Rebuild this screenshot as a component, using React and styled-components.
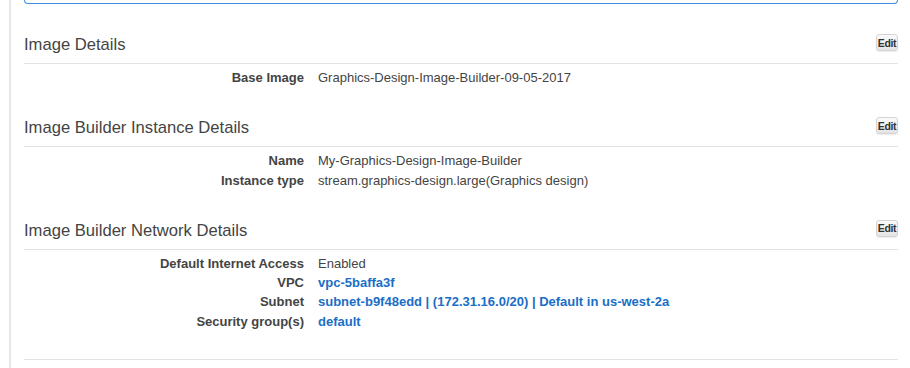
import React from 'react';
import styled, { createGlobalStyle } from 'styled-components';

const GlobalStyle = createGlobalStyle`
  html, body {
    margin: 0;
    padding: 0;
    background: #fff;
  }
  body {
    font-family: "Liberation Sans", Arial, Helvetica, sans-serif;
    color: #444;
  }
`;

const Page = styled.div`
  margin-left: 9px;
  min-height: 368px;
  border-left: 2px solid #e6e6e6;
  padding: 0 12px 0 13px;
`;

const TopBox = styled.div`
  height: 3px;
  border: 1px solid #3f8de0;
  border-top: none;
  border-radius: 0 0 4px 4px;
  margin-bottom: 23px;
`;

const Section = styled.section`
  border-bottom: ${p => (p.$last ? '1px solid #e2e2e2' : 'none')};
`;

const Header = styled.div`
  display: flex;
  justify-content: space-between;
  align-items: center;
  height: 36px;
  border-bottom: 1px solid #e2e2e2;
`;

const Title = styled.h2`
  margin: 0;
  font-size: 16.6px;
  font-weight: normal;
  color: #444;
`;

const EditButton = styled.button`
  align-self: flex-start;
  margin-top: 7px;
  height: 17px;
  width: 22px;
  padding: 0;
  border: 1px solid #d4d4d4;
  border-radius: 3px;
  background: linear-gradient(#fafafa, #e4e4e4);
  box-shadow: 0 1px 1px rgba(0, 0, 0, 0.08);
  font-family: "Liberation Sans", Arial, sans-serif;
  font-size: 10.5px;
  font-weight: bold;
  color: #333;
  letter-spacing: -0.3px;
`;

const Body = styled.div`
  padding: 4px 0 ${p => p.$bottom}px;
`;

const Row = styled.div`
  display: grid;
  grid-template-columns: 280px 1fr;
  column-gap: 14px;
  font-size: 13px;
  line-height: 19.3px;
`;

const Label = styled.div`
  text-align: right;
  font-weight: bold;
  color: #444;
`;

const Value = styled.div`
  color: ${p => (p.$link ? '#1a6ec6' : '#444')};
  font-weight: ${p => (p.$link ? 'bold' : 'normal')};
`;

const sections = [
  {
    title: 'Image Details',
    rows: [['Base Image', 'Graphics-Design-Image-Builder-09-05-2017']],
    bottom: 23,
  },
  {
    title: 'Image Builder Instance Details',
    rows: [
      ['Name', 'My-Graphics-Design-Image-Builder'],
      ['Instance type', 'stream.graphics-design.large(Graphics design)'],
    ],
    bottom: 23,
  },
  {
    title: 'Image Builder Network Details',
    rows: [
      ['Default Internet Access', 'Enabled'],
      ['VPC', 'vpc-5baffa3f', true],
      ['Subnet', 'subnet-b9f48edd | (172.31.16.0/20) | Default in us-west-2a', true],
      ['Security group(s)', 'default', true],
    ],
    bottom: 28,
    last: true,
  },
];

export default function App() {
  return (
    <>
      <GlobalStyle />
      <Page>
        <TopBox />
        {sections.map(s => (
          <Section key={s.title} $last={s.last}>
            <Header>
              <Title>{s.title}</Title>
              <EditButton>Edit</EditButton>
            </Header>
            <Body $bottom={s.bottom}>
              {s.rows.map(([label, value, link]) => (
                <Row key={label}>
                  <Label>{label}</Label>
                  <Value $link={link}>{value}</Value>
                </Row>
              ))}
            </Body>
          </Section>
        ))}
      </Page>
    </>
  );
}
